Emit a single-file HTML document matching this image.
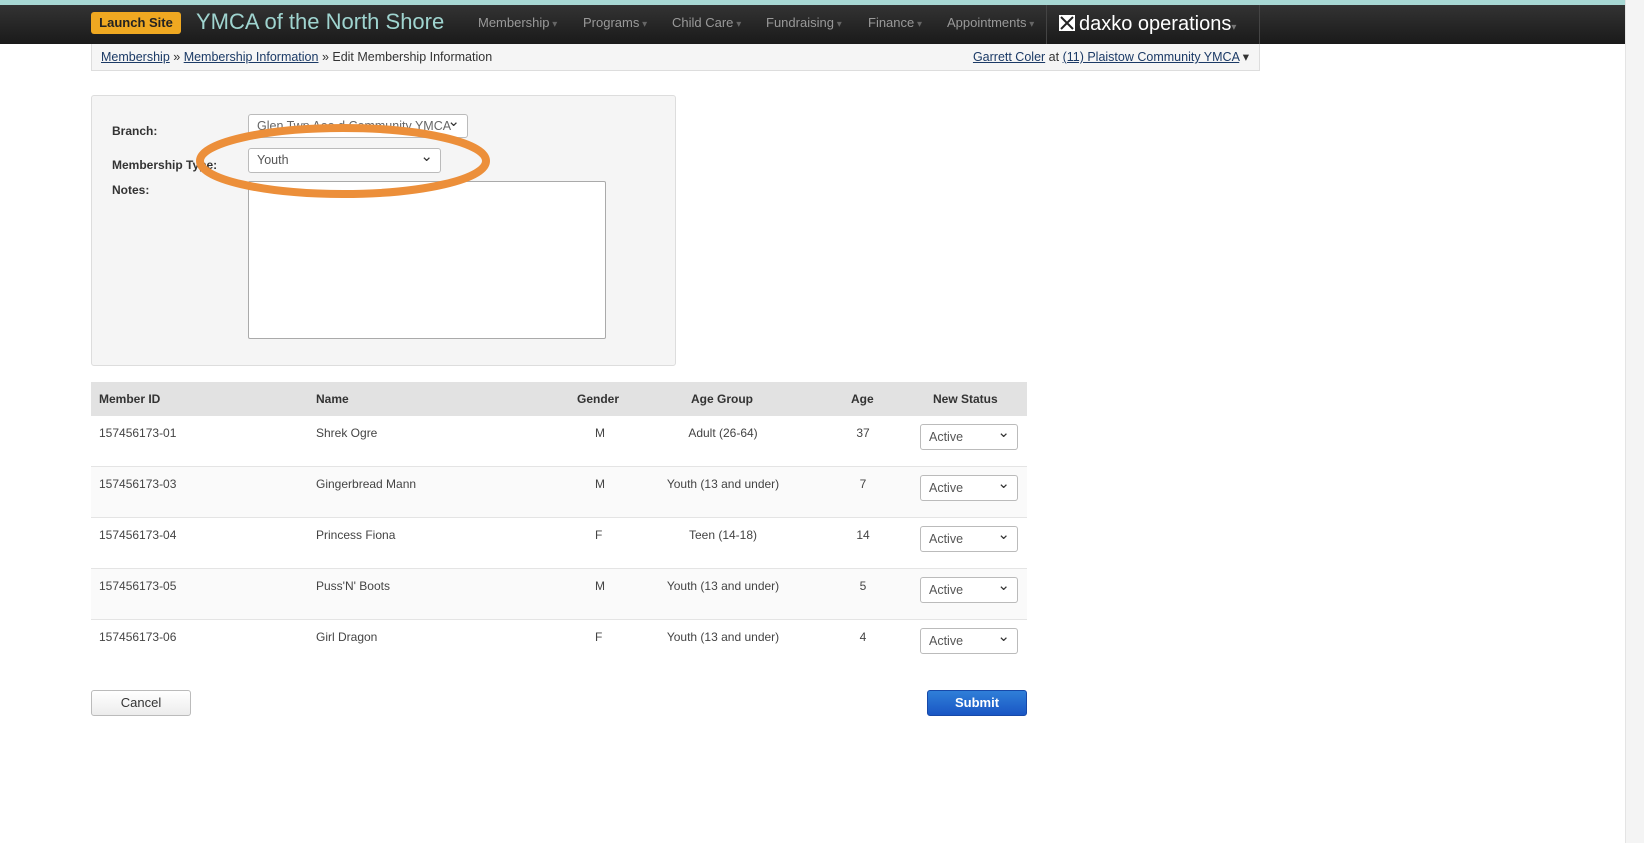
<!DOCTYPE html>
<html><head><meta charset="utf-8"><style>
*{box-sizing:border-box;margin:0;padding:0}
body{width:1644px;height:843px;background:#fff;font-family:"Liberation Sans",Arial,sans-serif;font-size:12px;color:#333;position:relative;overflow:hidden}
.a{position:absolute}
.teal{left:0;top:0;width:1644px;height:5px;background:#a8d8d4}
.nav{left:0;top:5px;width:1625px;height:39px;background:linear-gradient(#333,#1a1a1a)}
.sb{left:1625px;top:0;width:19px;height:843px;background:#f4f4f4;border-left:1px solid #e4e4e4}
.launch{left:91px;top:12px;width:90px;height:22px;background:#efa821;border-radius:3px;color:#222;font-weight:bold;font-size:13px;line-height:22px;text-align:center}
.title{left:196px;top:8px;color:#9fd4cf;font-size:22px;line-height:28px}
.m{top:15px;color:#999;font-size:13px}
.m:after{content:" ▾";font-size:10px;color:#666}
.dax{left:1046px;top:5px;width:214px;height:39px;border-left:1px solid #444;border-right:1px solid #444;color:#fff;font-size:20px;line-height:39px;padding-left:12px}
.bc{left:91px;top:44px;width:1169px;height:27px;background:#f5f5f5;border:1px solid #ddd;border-top:none;font-size:12.5px;line-height:26px;padding-left:9px;color:#333}
.bc u{color:#1b3a66}
.panel{left:91px;top:95px;width:585px;height:271px;background:#f5f5f5;border:1px solid #ddd;border-radius:3px}
.lbl{font-weight:bold;font-size:12px;color:#333}
.sel{background:#fff;border:1px solid #bbb;border-radius:3px;font-size:12.5px;color:#555;padding-left:8px}
.sel:after{content:"⌄";position:absolute;right:7px;top:-4px;font-size:15px;color:#333}
.thead{left:91px;top:382px;width:936px;height:34px;background:#e2e2e2}
.th{font-weight:bold;font-size:12px;top:392px;color:#333}
.row{left:91px;width:936px;height:51px;border-bottom:1px solid #e4e4e4}
.td{font-size:12px;color:#444}
.btn{height:26px;border-radius:3px;font-size:13px;line-height:24px;text-align:center}
</style></head><body>
<div class="a teal"></div>
<div class="a nav"></div>
<div class="a sb"></div>
<div class="a launch">Launch Site</div>
<div class="a title">YMCA of the North Shore</div>
<div class="a m" style="left:478px">Membership</div>
<div class="a m" style="left:583px">Programs</div>
<div class="a m" style="left:672px">Child Care</div>
<div class="a m" style="left:766px">Fundraising</div>
<div class="a m" style="left:868px">Finance</div>
<div class="a m" style="left:947px">Appointments</div>
<div class="a dax"><span style="display:inline-block;width:16px;height:16px;background:#fff;position:relative;vertical-align:-1px;margin-right:4px"><svg width="16" height="16" style="position:absolute;left:0;top:0"><path d="M2 2L8 8L2 14M14 2L8 8L14 14" stroke="#222" stroke-width="2" fill="none"/></svg></span>daxko operations<span style="font-size:10px;color:#777">▾</span></div>
<div class="a bc"><u>Membership</u> » <u>Membership Information</u> » Edit Membership Information<span style="position:absolute;right:10px;top:0"><u>Garrett Coler</u> at <u>(11) Plaistow Community YMCA</u> ▾</span></div>
<div class="a panel"></div>
<div class="a lbl" style="left:112px;top:124px">Branch:</div>
<div class="a lbl" style="left:112px;top:158px">Membership Type:</div>
<div class="a lbl" style="left:112px;top:183px">Notes:</div>
<div class="a sel" style="left:248px;top:114px;width:220px;height:24px;line-height:22px;color:#666">Glen Twp Aoo d Community YMCA</div>
<div class="a sel" style="left:248px;top:148px;width:193px;height:25px;line-height:23px">Youth</div>
<div class="a" style="left:248px;top:181px;width:358px;height:158px;background:#fff;border:1px solid #aaa;border-radius:2px"></div>
<svg class="a" style="left:190px;top:120px" width="310" height="86"><ellipse cx="153" cy="41" rx="143" ry="33" stroke="#ec8f3a" stroke-width="8" fill="none"/></svg>
<div class="a thead"></div>
<div class="a th" style="left:99px">Member ID</div>
<div class="a th" style="left:316px">Name</div>
<div class="a th" style="left:577px">Gender</div>
<div class="a th" style="left:691px">Age Group</div>
<div class="a th" style="left:851px">Age</div>
<div class="a th" style="left:933px">New Status</div>

<div class="a row" style="top:416px"></div>
<div class="a row" style="top:467px;background:#fafafa"></div>
<div class="a row" style="top:518px"></div>
<div class="a row" style="top:569px;background:#fafafa"></div>
<div class="a row" style="top:620px;border-bottom:none"></div>

<div class="a td" style="left:99px;top:426px">157456173-01</div><div class="a td" style="left:316px;top:426px">Shrek Ogre</div><div class="a td" style="left:595px;top:426px">M</div><div class="a td" style="left:673px;top:426px;width:100px;text-align:center">Adult (26-64)</div><div class="a td" style="left:853px;top:426px;width:20px;text-align:center">37</div>
<div class="a td" style="left:99px;top:477px">157456173-03</div><div class="a td" style="left:316px;top:477px">Gingerbread Mann</div><div class="a td" style="left:595px;top:477px">M</div><div class="a td" style="left:653px;top:477px;width:140px;text-align:center">Youth (13 and under)</div><div class="a td" style="left:853px;top:477px;width:20px;text-align:center">7</div>
<div class="a td" style="left:99px;top:528px">157456173-04</div><div class="a td" style="left:316px;top:528px">Princess Fiona</div><div class="a td" style="left:595px;top:528px">F</div><div class="a td" style="left:673px;top:528px;width:100px;text-align:center">Teen (14-18)</div><div class="a td" style="left:853px;top:528px;width:20px;text-align:center">14</div>
<div class="a td" style="left:99px;top:579px">157456173-05</div><div class="a td" style="left:316px;top:579px">Puss'N' Boots</div><div class="a td" style="left:595px;top:579px">M</div><div class="a td" style="left:653px;top:579px;width:140px;text-align:center">Youth (13 and under)</div><div class="a td" style="left:853px;top:579px;width:20px;text-align:center">5</div>
<div class="a td" style="left:99px;top:630px">157456173-06</div><div class="a td" style="left:316px;top:630px">Girl Dragon</div><div class="a td" style="left:595px;top:630px">F</div><div class="a td" style="left:653px;top:630px;width:140px;text-align:center">Youth (13 and under)</div><div class="a td" style="left:853px;top:630px;width:20px;text-align:center">4</div>

<div class="a sel" style="left:920px;top:424px;width:98px;height:26px;line-height:24px">Active</div>
<div class="a sel" style="left:920px;top:475px;width:98px;height:26px;line-height:24px">Active</div>
<div class="a sel" style="left:920px;top:526px;width:98px;height:26px;line-height:24px">Active</div>
<div class="a sel" style="left:920px;top:577px;width:98px;height:26px;line-height:24px">Active</div>
<div class="a sel" style="left:920px;top:628px;width:98px;height:26px;line-height:24px">Active</div>

<div class="a btn" style="left:91px;top:690px;width:100px;background:linear-gradient(#fff,#ececec);border:1px solid #bbb;color:#333">Cancel</div>
<div class="a btn" style="left:927px;top:690px;width:100px;background:linear-gradient(#2f7fd8,#1a56c4);border:1px solid #1748a8;color:#fff;font-weight:bold">Submit</div>
</body></html>
